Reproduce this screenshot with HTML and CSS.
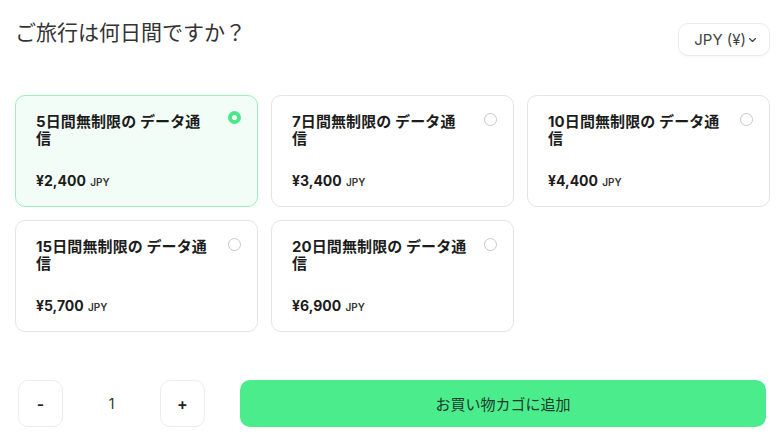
FILE: index.html
```html
<!DOCTYPE html>
<html lang="ja">
<head>
<meta charset="utf-8">
<title>ご旅行は何日間ですか？</title>
<link rel="stylesheet" href="styles.css">
</head>
<body>
<div class="page">
  <header class="head">
    <h1 class="title">ご旅行は何日間ですか？</h1>
    <button class="currency">JPY (¥)<svg class="chev" width="9" height="6" viewBox="0 0 9 6"><path d="M1.5 1.6 L4.5 4.4 L7.5 1.6" fill="none" stroke="#444" stroke-width="1.3" stroke-linecap="round" stroke-linejoin="round"/></svg></button>
  </header>

  <div class="plans">
    <div class="card selected">
      <div class="top"><div class="name">5日間無制限の データ通信</div><span class="radio on"></span></div>
      <div class="price">¥2,400 <span class="cur">JPY</span></div>
    </div>
    <div class="card">
      <div class="top"><div class="name">7日間無制限の データ通信</div><span class="radio"></span></div>
      <div class="price">¥3,400 <span class="cur">JPY</span></div>
    </div>
    <div class="card">
      <div class="top"><div class="name">10日間無制限の データ通信</div><span class="radio"></span></div>
      <div class="price">¥4,400 <span class="cur">JPY</span></div>
    </div>
    <div class="card">
      <div class="top"><div class="name">15日間無制限の データ通信</div><span class="radio"></span></div>
      <div class="price">¥5,700 <span class="cur">JPY</span></div>
    </div>
    <div class="card">
      <div class="top"><div class="name">20日間無制限の データ通信</div><span class="radio"></span></div>
      <div class="price">¥6,900 <span class="cur">JPY</span></div>
    </div>
  </div>

  <div class="actions">
    <div class="qty">
      <button class="step">-</button>
      <span class="count">1</span>
      <button class="step">+</button>
    </div>
    <button class="add">お買い物カゴに追加</button>
  </div>
</div>
</body>
</html>
```

FILE: styles.css
```css
* { box-sizing: border-box; }
html, body { margin: 0; background: #fff; }
body {
  font-family: "Inter", "Noto Sans CJK JP", sans-serif;
  color: #222;
}
.page {
  width: 780px;
  height: 440px;
  padding: 22px 10px 0 15px;
  overflow: hidden;
}
.head {
  display: flex;
  justify-content: space-between;
  align-items: flex-start;
}
.title {
  margin: 0;
  font-size: 21px;
  line-height: 22px;
  font-weight: 400;
  color: #333;
}
.currency {
  margin-top: 1px;
  width: 92px;
  height: 33px;
  border: 1px solid #ececec;
  border-radius: 10px;
  background: #fff;
  font-family: inherit;
  font-size: 15px;
  color: #444;
  display: flex;
  align-items: center;
  justify-content: flex-end;
  padding: 0 12px 0 0;
  gap: 2px;
  box-shadow: 0 1px 2px rgba(0,0,0,0.03);
}
.plans {
  margin-top: 39px;
  display: grid;
  grid-template-columns: repeat(3, 243px);
  grid-auto-rows: 112px;
  gap: 13px;
}
.card {
  border: 1px solid #e4e4e4;
  border-radius: 10px;
  padding: 15px 16px 0 20px;
  background: #fff;
  display: flex;
  flex-direction: column;
}
.card.selected {
  border-color: #9cefb8;
  background: #f3fdf7;
}
.top {
  display: flex;
  justify-content: space-between;
  align-items: flex-start;
}
.name {
  width: 177px;
  font-size: 15px;
  line-height: 17px;
  font-weight: 700;
  color: #1c1c1c;
  padding-top: 2px;
  letter-spacing: 0.1px;
}
.radio {
  width: 13px;
  height: 13px;
  border-radius: 50%;
  border: 1px solid #c8c8c8;
  background: #fff;
  flex: none;
  margin-top: 2px;
}
.radio.on {
  border: 4px solid #4ae88a;
  background: #fff;
  margin-top: 0;
}
.price {
  margin-top: 24px;
  font-size: 14px;
  line-height: 20px;
  font-weight: 700;
  color: #1c1c1c;
}
.cur {
  font-size: 10px;
  font-weight: 600;
  color: #333;
  margin-left: 1px;
}
.actions {
  margin-top: 48px;
  display: flex;
  align-items: center;
  padding-left: 3px;
  gap: 35px;
  padding-right: 4px;
}
.qty {
  display: flex;
  align-items: center;
}
.step {
  width: 45px;
  height: 47px;
  border: 1px solid #ececf2;
  border-radius: 10px;
  background: #fff;
  font-family: inherit;
  font-size: 16px;
  font-weight: 600;
  color: #222;
  padding: 0;
}
.count {
  width: 97px;
  text-align: center;
  font-size: 14px;
  color: #333;
}
.add {
  flex: 1;
  height: 47px;
  border: none;
  border-radius: 10px;
  background: #4aec8b;
  font-family: inherit;
  font-size: 15px;
  color: #1f3a2c;
}
```
